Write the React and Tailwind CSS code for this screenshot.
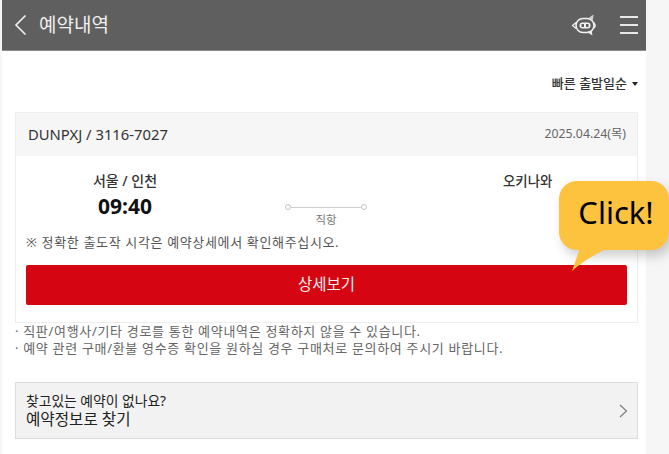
export default function App() {
  const font = { fontFamily: '"Noto Sans", "Noto Sans CJK KR", sans-serif' };
  return (
    <div style={font} className="relative flex h-[454px] w-[669px] overflow-hidden bg-[#f6f6f6]">
      <div className="ml-[2px] flex h-full w-[644px] flex-col bg-white">
        <header className="flex h-[51px] shrink-0 items-center border-b border-[#8a8a8a] bg-[#5f5f5f] pl-[12px] pr-[8px] text-white">
          <svg width="14" height="22" viewBox="0 0 14 22" fill="none" stroke="#f2f2f2" strokeWidth="1.6">
            <path d="M11.5 1.5 L2 11 L11.5 20.5" />
          </svg>
          <h1 className="ml-[11px] text-[19px] leading-[26px] text-[#f0f0f0]">예약내역</h1>
          <svg className="ml-auto" width="28" height="24" viewBox="0 0 28 24" fill="none" stroke="#f2f2f2">
            <rect x="5" y="5.5" width="18" height="14" rx="7" strokeWidth="1.6" />
            <rect x="8.5" y="9.5" width="11" height="6" rx="3" fill="#f2f2f2" stroke="none" />
            <rect x="10.5" y="11" width="2.5" height="3" fill="#5f5f5f" stroke="none" />
            <rect x="15" y="11" width="2.5" height="3" fill="#5f5f5f" stroke="none" />
            <path d="M5 9.5 L1.5 12.5 L5 15.5" strokeWidth="1.2" />
            <path d="M23 10 Q25.5 12.5 23 15" strokeWidth="1.2" />
            <path d="M17.5 5 L22.5 1.5 L22 7" fill="#cfcfcf" stroke="none" />
            <path d="M16 19 L21.5 22.5 L20.5 17.5" fill="#f2f2f2" stroke="none" />
          </svg>
          <div className="ml-[21px] flex w-[18px] flex-col gap-[6px]">
            <span className="h-[2px] bg-[#e8e8e8]" />
            <span className="h-[2px] bg-[#e8e8e8]" />
            <span className="h-[2px] bg-[#e8e8e8]" />
          </div>
        </header>

        <div className="flex flex-col pl-[13px] pr-[8px]">
          <div className="mt-[24px] flex h-[18px] items-center justify-end text-[13px] font-medium text-[#333]">
            빠른 출발일순
            <span className="ml-[5px] h-0 w-0 border-x-[3px] border-t-[4px] border-x-transparent border-t-[#222]" />
          </div>

          <section className="mt-[19px] h-[211px] border border-[#eeeeee]">
            <div className="flex h-[43px] items-center justify-between bg-[#f6f6f6] pl-[12px] pr-[11px]">
              <span className="text-[14.8px] text-[#333]">DUNPXJ / 3116-7027</span>
              <span className="text-[12.3px] text-[#666]">2025.04.24(목)</span>
            </div>
            <div className="flex flex-col px-[10px]">
              <div className="flex h-[77px]">
                <div className="flex w-[198px] flex-col items-center pt-[15px]">
                  <span className="text-[14px] leading-[20px] font-medium text-[#333]">서울 / 인천</span>
                  <span className="text-[21px] leading-[30px] font-bold text-[#111]">09:40</span>
                </div>
                <div className="ml-[61px] flex w-[82px] flex-col items-center pt-[48px]">
                  <div className="flex w-full items-center">
                    <span className="h-[6px] w-[6px] rounded-full border border-[#c4c4c4]" />
                    <span className="h-px flex-1 bg-[#d0d0d0]" />
                    <span className="h-[6px] w-[6px] rounded-full border border-[#c4c4c4]" />
                  </div>
                  <span className="mt-[3px] text-[11.5px] leading-[14px] text-[#777]">직항</span>
                </div>
                <div className="ml-[136px] pt-[15px] text-[13.4px] leading-[20px] font-medium text-[#333]">오키나와</div>
              </div>
              <p className="text-[13px] leading-[18px] tracking-[0.65px] text-[#555]">※ 정확한 출도작 시각은 예약상세에서 확인해주십시오.</p>
              <button className="mt-[14px] h-[40px] rounded-[2px] bg-[#d50512] text-[15.5px] text-[#f8f0f0]">상세보기</button>
            </div>
          </section>

          <ul className="text-[13px] leading-[17px] tracking-[0.68px] text-[#666]">
            <li>· 직판/여행사/기타 경로를 통한 예약내역은 정확하지 않을 수 있습니다.</li>
            <li>· 예약 관련 구매/환불 영수증 확인을 원하실 경우 구매처로 문의하여 주시기 바랍니다.</li>
          </ul>

          <div className="mt-[25px] flex h-[57px] items-center justify-between border border-[#dddddd] bg-[#f2f2f2] pl-[10px] pr-[9px]">
            <div className="flex flex-col">
              <span className="text-[13.8px] leading-[17px] text-[#222]">찾고있는 예약이 없나요?</span>
              <span className="text-[15.6px] leading-[20px] text-[#222]">예약정보로 찾기</span>
            </div>
            <svg width="9" height="14" viewBox="0 0 9 14" fill="none" stroke="#777" strokeWidth="1.1">
              <path d="M1 1 L7.5 7 L1 13" />
            </svg>
          </div>
        </div>
      </div>

      <div className="absolute left-[559px] top-[181px] flex h-[69px] w-[110px] items-center justify-center rounded-[18px] bg-[#fdc33f] pb-[6px] pl-[4px] text-[31px] text-black shadow-[4px_6px_12px_rgba(0,0,0,0.2)]">
        Click!
      </div>
      <svg className="absolute left-[570px] top-[248px]" width="38" height="24" viewBox="0 0 38 24">
        <path d="M10 0 L2 23 Q14 12 34 2 Z" fill="#fdc33f" />
      </svg>
    </div>
  );
}
